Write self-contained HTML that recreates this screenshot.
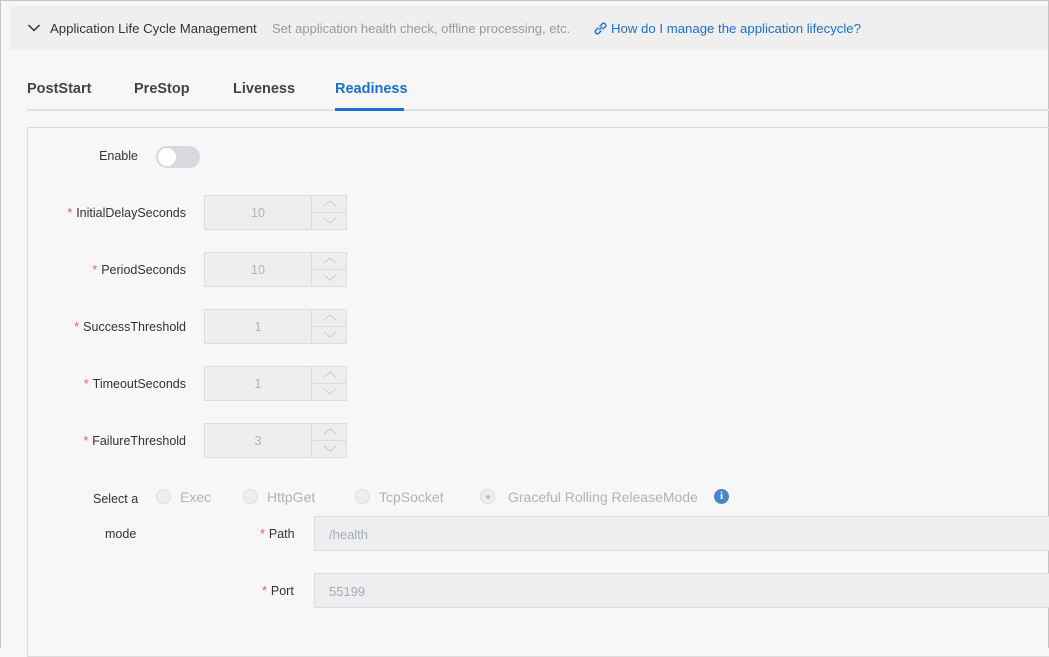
<!DOCTYPE html><html><head><style>
*{box-sizing:border-box;margin:0;padding:0}
body{width:1049px;height:648px;overflow:hidden;background:#f7f7f7;font-family:"Liberation Sans",sans-serif;position:relative;color:#333}
.a{position:absolute;white-space:nowrap}
.frame{position:absolute;left:0;top:0;width:1049px;height:648px;border:1px solid #c4c4c4;border-bottom:none}
.hdr{position:absolute;left:10px;top:6px;width:1038px;height:44px;background:#efefef}
.lbl{font-size:12.5px;color:#333;text-align:right;width:120px}
.star{color:#e86060;margin-right:4px}
.num{position:absolute;left:204px;width:143px;height:35px;border:1px solid #dcdde0;background:#eceef0}
.num .v{position:absolute;left:0;width:107px;top:0;height:33px;line-height:35px;text-align:center;color:#b0b3b8;font-size:12.5px;border-right:1px solid #dcdde0}
.num .s{position:absolute;left:107px;right:0;top:16px;border-top:1px solid #dcdde0}
.num svg{position:absolute;left:116px}
.radio{position:absolute;width:15px;height:15px;border-radius:50%;border:1px solid #dcdde0;background:#eceef0}
.rt{font-size:14px;color:#b0b3b8}
.inp{position:absolute;left:314px;width:740px;height:35px;border:1px solid #dcdde0;background:#eceef0;font-size:13px;color:#a8abb0;line-height:35px;padding-left:14px}
</style></head><body>
<div class="frame"></div>
<div class="hdr"></div>
<svg class="a" style="left:27px;top:23px" width="14" height="10"><path d="M1.5 2 L7 7.5 L12.5 2" stroke="#333" stroke-width="1.5" fill="none"/></svg>
<div class="a" style="left:50px;top:21px;font-size:13.2px;color:#333">Application Life Cycle Management</div>
<div class="a" style="left:272px;top:21px;font-size:13px;color:#999">Set application health check, offline processing, etc.</div>
<svg class="a" style="left:593px;top:21px" width="15" height="15" viewBox="0 0 15 15"><path d="M6.5 8.5 L9 6 M5 7 L2.5 9.5 a2.2 2.2 0 0 0 3 3 L8 10 M7 5 L9.5 2.5 a2.2 2.2 0 0 1 3 3 L10 8" stroke="#1a6fd0" stroke-width="1.4" fill="none" stroke-linecap="round"/></svg>
<div class="a" style="left:611px;top:21px;font-size:13.2px;color:#1a6fd0">How do I manage the application lifecycle?</div>

<div class="a" style="left:27px;top:109px;width:1022px;height:2px;background:#dfe2e6"></div>
<div class="a" style="left:27px;top:81px;font-size:14.5px;font-weight:bold;color:#444">PostStart</div>
<div class="a" style="left:134px;top:81px;font-size:14.5px;font-weight:bold;color:#444">PreStop</div>
<div class="a" style="left:233px;top:81px;font-size:14.5px;font-weight:bold;color:#444">Liveness</div>
<div class="a" style="left:335px;top:81px;font-size:14.5px;font-weight:bold;color:#1a6fd0">Readiness</div>
<div class="a" style="left:335px;top:108px;width:69px;height:3px;background:#1a6fd0"></div>

<div class="a" style="left:27px;top:127px;width:1030px;height:530px;border:1px solid #dcdcdc"></div>

<div class="a lbl" style="left:18px;top:149px">Enable</div>
<div class="a" style="left:156px;top:146px;width:44px;height:22px;border-radius:11px;background:#d7d9de"></div>
<div class="a" style="left:158px;top:148px;width:18px;height:18px;border-radius:50%;background:#fff"></div>

<div class="a lbl" style="left:66px;top:206px"><span class="star">*</span>InitialDelaySeconds</div>
<div class="num" style="top:195px"><div class="v">10</div><div class="s"></div><svg style="top:4px" width="18" height="8"><path d="M3 6 L9 1 L15 6" stroke="#c9ccd0" fill="none"/></svg><svg style="top:21px" width="18" height="8"><path d="M3 1 L9 6 L15 1" stroke="#c9ccd0" fill="none"/></svg></div>
<div class="a lbl" style="left:66px;top:263px"><span class="star">*</span>PeriodSeconds</div>
<div class="num" style="top:252px"><div class="v">10</div><div class="s"></div><svg style="top:4px" width="18" height="8"><path d="M3 6 L9 1 L15 6" stroke="#c9ccd0" fill="none"/></svg><svg style="top:21px" width="18" height="8"><path d="M3 1 L9 6 L15 1" stroke="#c9ccd0" fill="none"/></svg></div>
<div class="a lbl" style="left:66px;top:320px"><span class="star">*</span>SuccessThreshold</div>
<div class="num" style="top:309px"><div class="v">1</div><div class="s"></div><svg style="top:4px" width="18" height="8"><path d="M3 6 L9 1 L15 6" stroke="#c9ccd0" fill="none"/></svg><svg style="top:21px" width="18" height="8"><path d="M3 1 L9 6 L15 1" stroke="#c9ccd0" fill="none"/></svg></div>
<div class="a lbl" style="left:66px;top:377px"><span class="star">*</span>TimeoutSeconds</div>
<div class="num" style="top:366px"><div class="v">1</div><div class="s"></div><svg style="top:4px" width="18" height="8"><path d="M3 6 L9 1 L15 6" stroke="#c9ccd0" fill="none"/></svg><svg style="top:21px" width="18" height="8"><path d="M3 1 L9 6 L15 1" stroke="#c9ccd0" fill="none"/></svg></div>
<div class="a lbl" style="left:66px;top:434px"><span class="star">*</span>FailureThreshold</div>
<div class="num" style="top:423px"><div class="v">3</div><div class="s"></div><svg style="top:4px" width="18" height="8"><path d="M3 6 L9 1 L15 6" stroke="#c9ccd0" fill="none"/></svg><svg style="top:21px" width="18" height="8"><path d="M3 1 L9 6 L15 1" stroke="#c9ccd0" fill="none"/></svg></div>

<div class="a" style="left:93px;top:492px;font-size:12.5px">Select a</div>
<div class="a" style="left:105px;top:527px;font-size:12.5px">mode</div>
<div class="radio" style="left:156px;top:489px"></div><div class="a rt" style="left:180px;top:489px">Exec</div>
<div class="radio" style="left:243px;top:489px"></div><div class="a rt" style="left:267px;top:489px">HttpGet</div>
<div class="radio" style="left:355px;top:489px"></div><div class="a rt" style="left:379px;top:489px">TcpSocket</div>
<div class="radio" style="left:480px;top:489px"></div><div class="a" style="left:486px;top:495px;width:4px;height:4px;border-radius:50%;background:#b8bbc0"></div>
<div class="a rt" style="left:508px;top:489px">Graceful Rolling ReleaseMode</div>
<div class="a" style="left:714px;top:489px;width:15px;height:15px;border-radius:50%;background:#4a85c9;color:#fff;font-size:11px;font-weight:bold;text-align:center;line-height:15px;font-family:'Liberation Serif',serif">i</div>

<div class="a" style="left:260px;top:527px;font-size:12.5px"><span class="star">*</span>Path</div>
<div class="inp" style="top:516px">/health</div>
<div class="a" style="left:262px;top:584px;font-size:12.5px"><span class="star">*</span>Port</div>
<div class="inp" style="top:573px">55199</div>
</body></html>
